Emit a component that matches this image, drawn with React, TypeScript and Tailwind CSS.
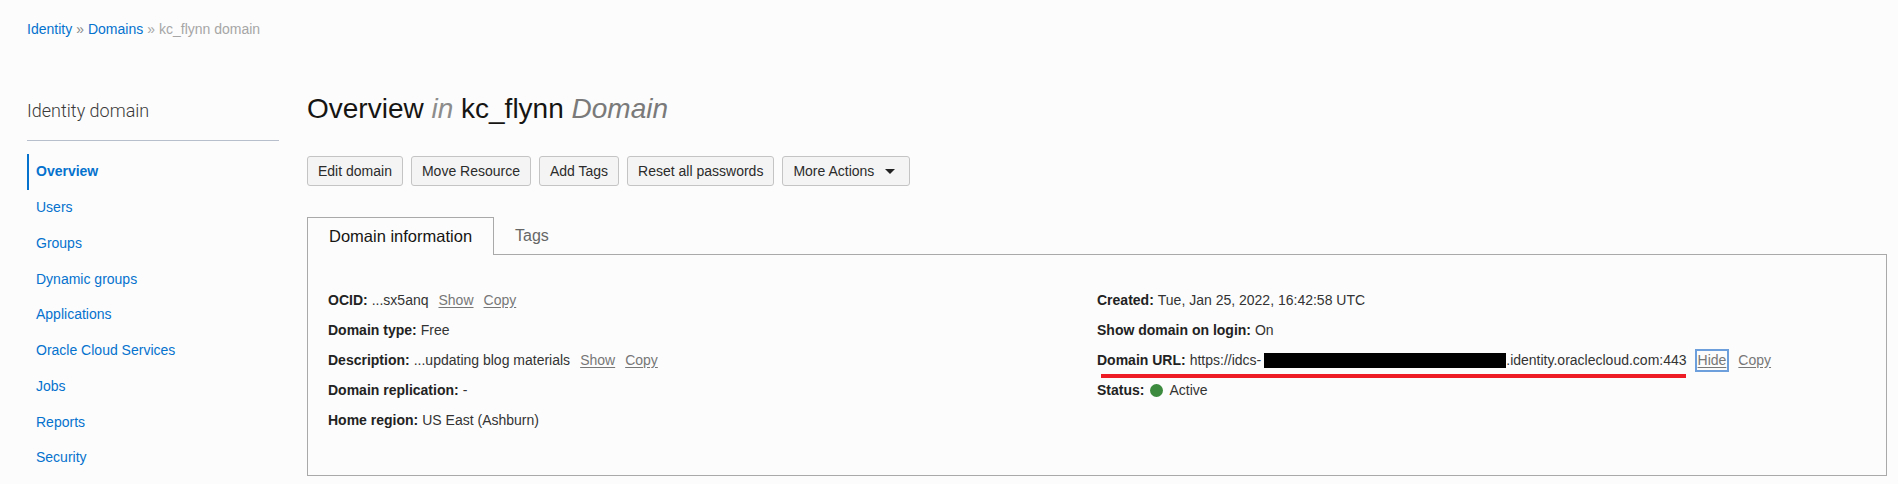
import { ReactNode } from "react";

const navItems = [
  "Overview",
  "Users",
  "Groups",
  "Dynamic groups",
  "Applications",
  "Oracle Cloud Services",
  "Jobs",
  "Reports",
  "Security",
];

const actions = ["Edit domain", "Move Resource", "Add Tags", "Reset all passwords"];

function TextLink({ children, className = "" }: { children: ReactNode; className?: string }) {
  return <span className={`text-[#777] underline underline-offset-2 ${className}`}>{children}</span>;
}

function InfoRow({ label, children }: { label: string; children: ReactNode }) {
  return (
    <div className="flex h-[30px] items-center whitespace-nowrap">
      <span className="font-bold text-[#222]">{label}</span>
      <span className="ml-[4px] flex items-center text-[#333]">{children}</span>
    </div>
  );
}

export default function App() {
  return (
    <div className="min-h-[484px] bg-[#fcfcfc] pl-[27px] pr-[11px] pt-[20px] font-['Liberation_Sans',Arial,sans-serif] text-[#161513]">
      <div className="flex h-[18px] items-center gap-[4px] text-[14px] leading-[18px]">
        <span className="text-[#0572ce]">Identity</span>
        <span className="text-[#8a8a8a]">»</span>
        <span className="text-[#0572ce]">Domains</span>
        <span className="text-[#a6a6a6]">»</span>
        <span className="text-[#a6a6a6]">kc_flynn domain</span>
      </div>

      <div className="mt-[55px] flex gap-[28px]">
        <aside className="w-[252px] shrink-0 pt-[7px]">
          <h2 className="font-['Roboto',sans-serif] text-[18px] font-light leading-[22px] text-[#3a3a3a]">
            Identity domain
          </h2>
          <div className="mt-[18px] h-px bg-[#b7bfcc]" />
          <nav className="mt-[13px] text-[14px]">
            {navItems.map((item, i) =>
              i === 0 ? (
                <div
                  key={item}
                  className="flex h-[35.75px] items-center border-l-2 border-[#0572ce] pl-[7px] font-bold text-[#0572ce]"
                >
                  {item}
                </div>
              ) : (
                <div key={item} className="flex h-[35.75px] items-center pl-[9px] text-[#0572ce]">
                  {item}
                </div>
              )
            )}
          </nav>
        </aside>

        <main className="min-w-0 flex-1">
          <h1 className="text-[28px] leading-[32px] text-[#161513]">
            Overview <i className="text-[#8c8c8c]">in</i> kc_flynn <i className="text-[#7a7a7a]">Domain</i>
          </h1>

          <div className="mt-[31px] flex gap-[8px] text-[14px] text-[#2b2b2b]">
            {actions.map((a) => (
              <button
                key={a}
                className="h-[30px] rounded-[3px] border border-[#c4c4c4] bg-[#f4f4f4] px-[10px]"
              >
                {a}
              </button>
            ))}
            <button className="flex h-[30px] items-center gap-[11px] rounded-[3px] border border-[#c4c4c4] bg-[#f4f4f4] pl-[10px] pr-[14px]">
              More Actions
              <svg width="10" height="5" viewBox="0 0 10 5">
                <path d="M0 0h10L5 5z" fill="#222" />
              </svg>
            </button>
          </div>

          <div className="mt-[31px] flex items-end text-[16px]">
            <div className="relative z-10 -mb-px flex h-[38px] items-center border-l border-r border-t border-[#a9a9a9] bg-[#fcfcfc] px-[21px] text-[16.5px] text-[#161513]">
              Domain information
            </div>
            <div className="flex h-[37px] items-center px-[21px] text-[#666]">Tags</div>
          </div>

          <div className="grid h-[222px] grid-cols-[769px_1fr] border border-[#a9a9a9] pl-[20px] pt-[30px] text-[14px]">
            <div>
              <InfoRow label="OCID:">
                ...sx5anq
                <TextLink className="ml-[10px]">Show</TextLink>
                <TextLink className="ml-[10px]">Copy</TextLink>
              </InfoRow>
              <InfoRow label="Domain type:">Free</InfoRow>
              <InfoRow label="Description:">
                ...updating blog materials
                <TextLink className="ml-[10px]">Show</TextLink>
                <TextLink className="ml-[10px]">Copy</TextLink>
              </InfoRow>
              <InfoRow label="Domain replication:">-</InfoRow>
              <InfoRow label="Home region:">US East (Ashburn)</InfoRow>
            </div>

            <div>
              <InfoRow label="Created:">Tue, Jan 25, 2022, 16:42:58 UTC</InfoRow>
              <InfoRow label="Show domain on login:">On</InfoRow>
              <div className="relative flex h-[30px] items-center whitespace-nowrap">
                <span className="font-bold text-[#222]">Domain URL:</span>
                <span className="ml-[4px] flex items-center text-[#333]">
                  https://idcs-
                  <span className="ml-[3px] inline-block h-[15px] w-[242px] bg-black" />
                  .identity.oraclecloud.com:443
                </span>
                <span className="ml-[8px] inline-block border-2 border-[#6d9fdc] px-px leading-[19px]">
                  <TextLink>Hide</TextLink>
                </span>
                <TextLink className="ml-[9px]">Copy</TextLink>
                <div className="absolute left-[4px] top-[29px] h-[4px] w-[585px] bg-[#ee1c24]" />
              </div>
              <div className="flex h-[30px] items-center whitespace-nowrap">
                <span className="font-bold text-[#222]">Status:</span>
                <span className="ml-[6px] inline-block h-[13px] w-[13px] rounded-full bg-[#3b8a3d]" />
                <span className="ml-[6px] text-[#333]">Active</span>
              </div>
            </div>
          </div>
        </main>
      </div>
    </div>
  );
}
